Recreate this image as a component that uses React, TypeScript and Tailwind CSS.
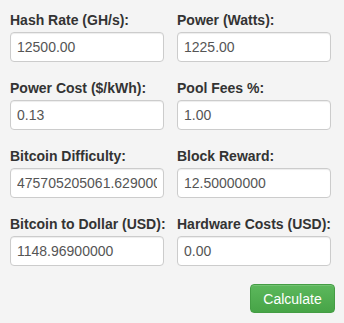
import React from "react";

const fields: [string, string][] = [
  ["Hash Rate (GH/s):", "12500.00"],
  ["Power (Watts):", "1225.00"],
  ["Power Cost ($/kWh):", "0.13"],
  ["Pool Fees %:", "1.00"],
  ["Bitcoin Difficulty:", "475705205061.62900000"],
  ["Block Reward:", "12.50000000"],
  ["Bitcoin to Dollar (USD):", "1148.96900000"],
  ["Hardware Costs (USD):", "0.00"],
];

export default function App() {
  return (
    <div
      className="w-[344px] h-[323px] bg-[#f4f4f4] pl-[10px] pr-[13px] pt-[10px] text-[#333]"
      style={{ fontFamily: '"Liberation Sans", Arial, sans-serif' }}
    >
      <div className="grid grid-cols-2 gap-x-[13px] gap-y-[16px]">
        {fields.map(([label, value]) => (
          <div key={label} className="flex flex-col">
            <label className="text-[14px] leading-[20px] font-bold whitespace-nowrap mb-[2px]">
              {label}
            </label>
            <input
              type="text"
              defaultValue={value}
              className="w-full h-[30px] bg-white border border-[#ccc] rounded-[4px] px-[6px] text-[14px] text-[#555] shadow-[inset_0_1px_1px_rgba(0,0,0,0.075)] outline-none"
              style={{ fontFamily: '"Liberation Sans", Arial, sans-serif' }}
            />
          </div>
        ))}
      </div>
      <div className="flex justify-end mt-[18px]">
        <button className="w-[85px] h-[29px] mr-[-4px] rounded-[4px] border border-[#449d44] bg-gradient-to-b from-[#5cb85c] to-[#47a447] text-white text-[14px] leading-none shadow-[inset_0_1px_0_rgba(255,255,255,0.15)]">
          Calculate
        </button>
      </div>
    </div>
  );
}
